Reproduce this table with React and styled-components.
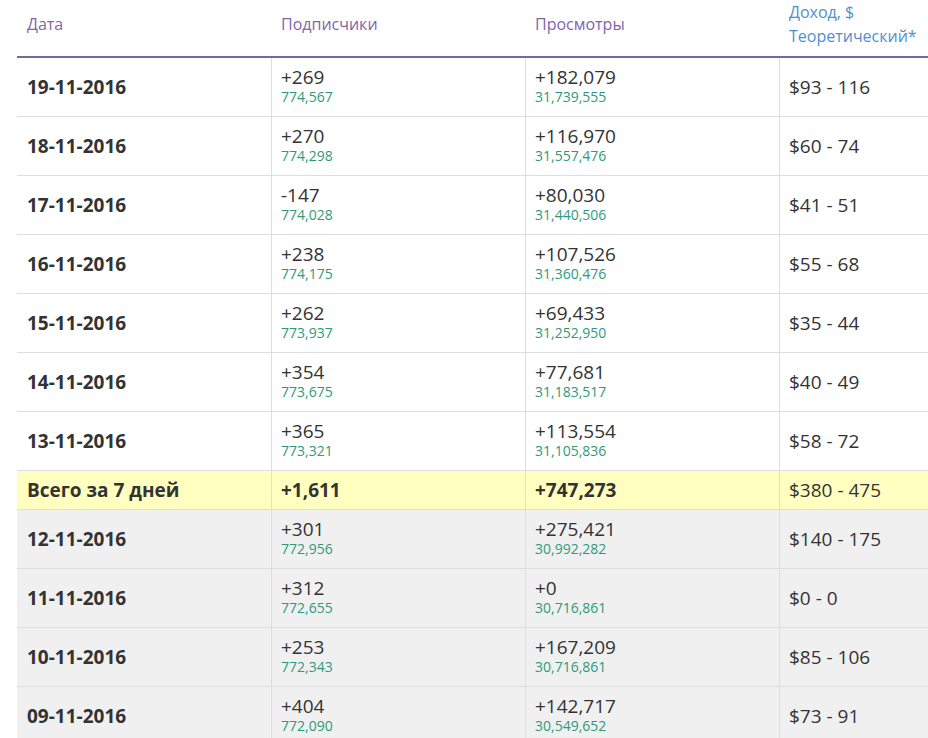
import React from "react";
import styled, { createGlobalStyle } from "styled-components";

const Global = createGlobalStyle`
  html, body { margin: 0; padding: 0; background: #fff; overflow: hidden; }
  body { font-family: "Open Sans", "Noto Sans", sans-serif; color: #333; }
`;

const Page = styled.div`
  padding-left: 17px;
  width: 911px;
`;

const HeadRow = styled.div`
  display: grid;
  grid-template-columns: 254px 254px 254px 1fr;
  height: 56px;
  border-bottom: 2px solid #7e62a6;
`;

const HeadCell = styled.div`
  display: flex;
  flex-direction: column;
  justify-content: center;
  padding: 0 0 9px 10px;
  font-size: 16px;
  line-height: 24px;
  color: ${(p) => (p.$link ? "#4d90d2" : "#8266a8")};
  white-space: nowrap;
`;

const Row = styled.div`
  display: grid;
  grid-template-columns: 254px 254px 254px 1fr;
  height: ${(p) => (p.$total ? "38px" : "58px")};
  border-bottom: 1px solid #dedede;
  background: ${(p) => (p.$total ? "#ffffc0" : p.$gray ? "#f0f0f0" : "#fff")};
`;

const Cell = styled.div`
  display: flex;
  flex-direction: column;
  justify-content: center;
  padding-left: ${(p) => (p.$first ? "10px" : "9px")};
  border-left: ${(p) => (p.$first ? "none" : "1px solid #dedede")};
  font-size: 19px;
  line-height: 22px;
  font-weight: ${(p) => (p.$bold ? 700 : 400)};
  color: #333;
  white-space: nowrap;
`;

const Main = styled.span`
  font-size: 19px;
  line-height: 20px;
`;

const Sub = styled.span`
  font-size: 14px;
  line-height: 20px;
  color: #2f9a78;
`;

const rows = [
  ["19-11-2016", "+269", "774,567", "+182,079", "31,739,555", "$93 - 116"],
  ["18-11-2016", "+270", "774,298", "+116,970", "31,557,476", "$60 - 74"],
  ["17-11-2016", "-147", "774,028", "+80,030", "31,440,506", "$41 - 51"],
  ["16-11-2016", "+238", "774,175", "+107,526", "31,360,476", "$55 - 68"],
  ["15-11-2016", "+262", "773,937", "+69,433", "31,252,950", "$35 - 44"],
  ["14-11-2016", "+354", "773,675", "+77,681", "31,183,517", "$40 - 49"],
  ["13-11-2016", "+365", "773,321", "+113,554", "31,105,836", "$58 - 72"],
];

const older = [
  ["12-11-2016", "+301", "772,956", "+275,421", "30,992,282", "$140 - 175"],
  ["11-11-2016", "+312", "772,655", "+0", "30,716,861", "$0 - 0"],
  ["10-11-2016", "+253", "772,343", "+167,209", "30,716,861", "$85 - 106"],
  ["09-11-2016", "+404", "772,090", "+142,717", "30,549,652", "$73 - 91"],
];

function DataRow({ r, gray }) {
  return (
    <Row $gray={gray}>
      <Cell $first $bold>{r[0]}</Cell>
      <Cell>
        <Main>{r[1]}</Main>
        <Sub>{r[2]}</Sub>
      </Cell>
      <Cell>
        <Main>{r[3]}</Main>
        <Sub>{r[4]}</Sub>
      </Cell>
      <Cell>{r[5]}</Cell>
    </Row>
  );
}

export default function App() {
  return (
    <>
      <Global />
      <Page>
        <HeadRow>
          <HeadCell>Дата</HeadCell>
          <HeadCell>Подписчики</HeadCell>
          <HeadCell>Просмотры</HeadCell>
          <HeadCell $link>
            <span>Доход, $</span>
            <span>Теоретический*</span>
          </HeadCell>
        </HeadRow>
        {rows.map((r) => (
          <DataRow key={r[0]} r={r} />
        ))}
        <Row $total>
          <Cell $first $bold>Всего за 7 дней</Cell>
          <Cell $bold>+1,611</Cell>
          <Cell $bold>+747,273</Cell>
          <Cell>$380 - 475</Cell>
        </Row>
        {older.map((r) => (
          <DataRow key={r[0]} r={r} gray />
        ))}
      </Page>
    </>
  );
}
